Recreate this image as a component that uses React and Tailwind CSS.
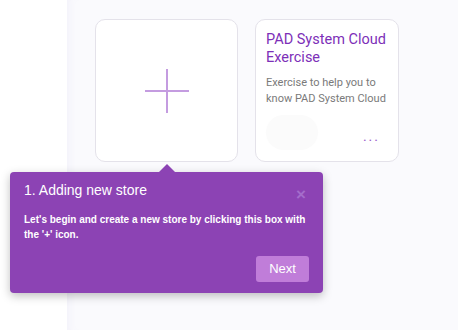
import { useState } from 'react';

const PlusIcon = () => (
  <svg width="44" height="44" viewBox="0 0 44 44">
    <path d="M22 0v44M0 22h44" stroke="#c49ce0" strokeWidth="2" />
  </svg>
);

const Tour = ({ onNext }) => (
  <div className="absolute left-[10px] top-[172px] w-[313px] h-[121px] rounded-[4px] bg-[#8c43b4] shadow-[0_3px_10px_rgba(0,0,0,0.25)] font-['Liberation_Sans',Arial,sans-serif] text-white">
    {/* little arrow pointing to the add card */}
    <div className="absolute left-[149px] top-[-8px] w-0 h-0 border-x-[8px] border-x-transparent border-b-[8px] border-b-[#8c43b4]" />
    <div className="flex items-start justify-between pl-[14px] pr-[17px] pt-[10px]">
      <p className="text-[14px] leading-[17px]">1. Adding new store</p>
      <span className="mt-[7px] text-[17px] leading-[12px] font-bold text-[#a46ccb] cursor-pointer">×</span>
    </div>
    <p className="pl-[14px] pr-[8px] mt-[11px] text-[10px] leading-[15px] font-bold">
      Let's begin and create a new store by clicking this box with the '+' icon.
    </p>
    <div className="flex justify-end pr-[14px] mt-[14px]">
      <button
        onClick={onNext}
        className="w-[53px] h-[26px] rounded-[3px] bg-[#c07dd9] text-[13px] text-white"
      >
        Next
      </button>
    </div>
  </div>
);

export default function App() {
  const [step, setStep] = useState(1);

  return (
    <div className="relative flex w-[458px] h-[330px] overflow-hidden bg-white font-['Roboto',sans-serif]">
      <aside className="w-[67px] bg-white" />
      <main className="flex-1 bg-[#fafafd] shadow-[inset_8px_0_8px_-6px_rgba(120,100,180,0.06)] pt-[19px] pl-[28px]">
        <div className="flex gap-[17px]">
          <div className="w-[143px] h-[143px] rounded-[10px] border border-[#e4e2ea] bg-white flex items-center justify-center cursor-pointer">
            <PlusIcon />
          </div>
          <div className="w-[144px] h-[143px] rounded-[10px] border border-[#e4e2ea] bg-white pl-[10px] pr-[8px] pt-[11px] flex flex-col">
            <h3 className="text-[14.5px] leading-[18px] text-[#7d2fb8]">PAD System Cloud Exercise</h3>
            <p className="mt-[8px] text-[11px] leading-[16px] text-[#7a7a7a]">Exercise to help you to know PAD System Cloud</p>
            <div className="mt-auto mb-[11px] flex items-center justify-between">
              <div className="w-[52px] h-[35px] rounded-full bg-[#fbfbfb]" />
              <span className="mr-[10px] mt-[6px] text-[14px] leading-[10px] tracking-[2px] text-[#9a5ccc]">...</span>
            </div>
          </div>
        </div>
      </main>
      {step === 1 && <Tour onNext={() => setStep(1)} />}
    </div>
  );
}
